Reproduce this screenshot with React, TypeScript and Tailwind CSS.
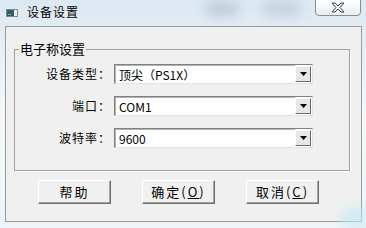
import React from 'react';

const cjk = { fontFamily: '"Noto Sans CJK SC", "Liberation Sans", sans-serif' };
const latin = { fontFamily: '"Liberation Sans", "Noto Sans CJK SC", sans-serif' };

function Combo({ value }: { value: string }) {
  return (
    <div className="flex h-[20px] w-[199px] items-stretch border border-t-[#808080] border-l-[#808080] border-r-[#e3e3e3] border-b-[#e3e3e3] bg-white">
      <div className="flex flex-1 items-center border-t border-l border-[#404040]/40 pl-[3px] text-[12px] text-black" style={cjk}>
        {value}
      </div>
      <div className="my-[1px] mr-[1px] flex w-[16px] items-center justify-center border border-t-white border-l-white border-r-[#696969] border-b-[#696969] bg-[#e6e6e6]">
        <svg width="7" height="4" viewBox="0 0 7 4">
          <path d="M0 0h7L3.5 4z" fill="#000" />
        </svg>
      </div>
    </div>
  );
}

function Btn({ children }: { children: React.ReactNode }) {
  return (
    <button className="flex h-[24px] w-[73px] items-center justify-center border border-t-white border-l-white border-r-[#6f6f6f] border-b-[#6f6f6f] bg-[#f0f0f0] text-[13px] tracking-[2px] text-black shadow-[inset_-1px_-1px_0_#a0a0a0]" style={cjk}>
      {children}
    </button>
  );
}

export default function App() {
  const rows = [
    { label: '设备类型：', value: '顶尖（PS1X）' },
    { label: '端口：', value: 'COM1' },
    { label: '波特率：', value: '9600' },
  ];

  return (
    <div className="relative h-[228px] w-[366px] overflow-hidden bg-gradient-to-b from-[#dce8f2] via-[#f4f8fb] to-[#eef5f8]">
      {/* blurred glass behind the title */}
      <div className="absolute left-[205px] top-[2px] h-[14px] w-[34px] rounded-full bg-[#a9b8c6] opacity-60 blur-[6px]" />
      <div className="absolute left-[262px] top-[2px] h-[14px] w-[40px] rounded-full bg-[#b3c1ce] opacity-60 blur-[6px]" />
      <div className="absolute left-[340px] top-[208px] h-[20px] w-[30px] rounded-full bg-[#bfe9f4] opacity-70 blur-[6px]" />

      <div className="relative flex h-[26px] items-start pr-[5px]">
        <div className="ml-[6px] mt-[9px]">
          <svg width="12" height="8" viewBox="0 0 12 8">
            <rect x="0.5" y="0.5" width="11" height="7" fill="#e8eef2" stroke="#7a8a95" />
            <rect x="1" y="1" width="7" height="6" fill="#2f5f63" />
            <rect x="2" y="5" width="3" height="1" fill="#7fb0a8" />
          </svg>
        </div>
        <span className="ml-[9px] mt-[4px] text-[12px] leading-[16px] tracking-[1px] text-black" style={cjk}>
          设备设置
        </span>
        <div className="ml-auto mt-[-1px] flex h-[17px] w-[46px] items-center justify-center rounded-b-[4px] border border-[#8c8c8c] bg-gradient-to-b from-white to-[#e9eef2]">
          <svg width="14" height="11" viewBox="0 0 14 11">
            <path
              d="M1 1h3l3 3 3-3h3L9 5.5 13 10h-3L7 7 4 10H1l4-4.5z"
              fill="#fff"
              stroke="#3c3c3c"
              strokeWidth="1"
              strokeLinejoin="round"
            />
          </svg>
        </div>
      </div>

      <div className="ml-[5px] mr-[4px] h-[196px] border border-[#9a9a9a] bg-[#f0f0f0]">
        <fieldset className="mx-[8px] mt-[14px] h-[130px] w-[336px] border border-[#a0a0a0] shadow-[1px_1px_0_#fff]">
          <legend className="ml-[4px] px-[1px] text-[13px] leading-[16px] text-black" style={cjk}>
            电子称设置
          </legend>
          <div className="flex flex-col gap-[12px] pt-[7px]">
            {rows.map((r) => (
              <div key={r.label} className="flex items-center">
                <span className="w-[96px] text-right text-[12px] tracking-[1px] text-black" style={cjk}>
                  {r.label}
                </span>
                <div className="ml-[3px]">
                  <Combo value={r.value} />
                </div>
              </div>
            ))}
          </div>
        </fieldset>

        <div className="ml-[32px] mt-[9px] flex gap-[31px]" style={latin}>
          <Btn>帮助</Btn>
          <Btn>
            确定(<span className="underline">O</span>)
          </Btn>
          <Btn>
            取消(<span className="underline">C</span>)
          </Btn>
        </div>
      </div>
    </div>
  );
}
